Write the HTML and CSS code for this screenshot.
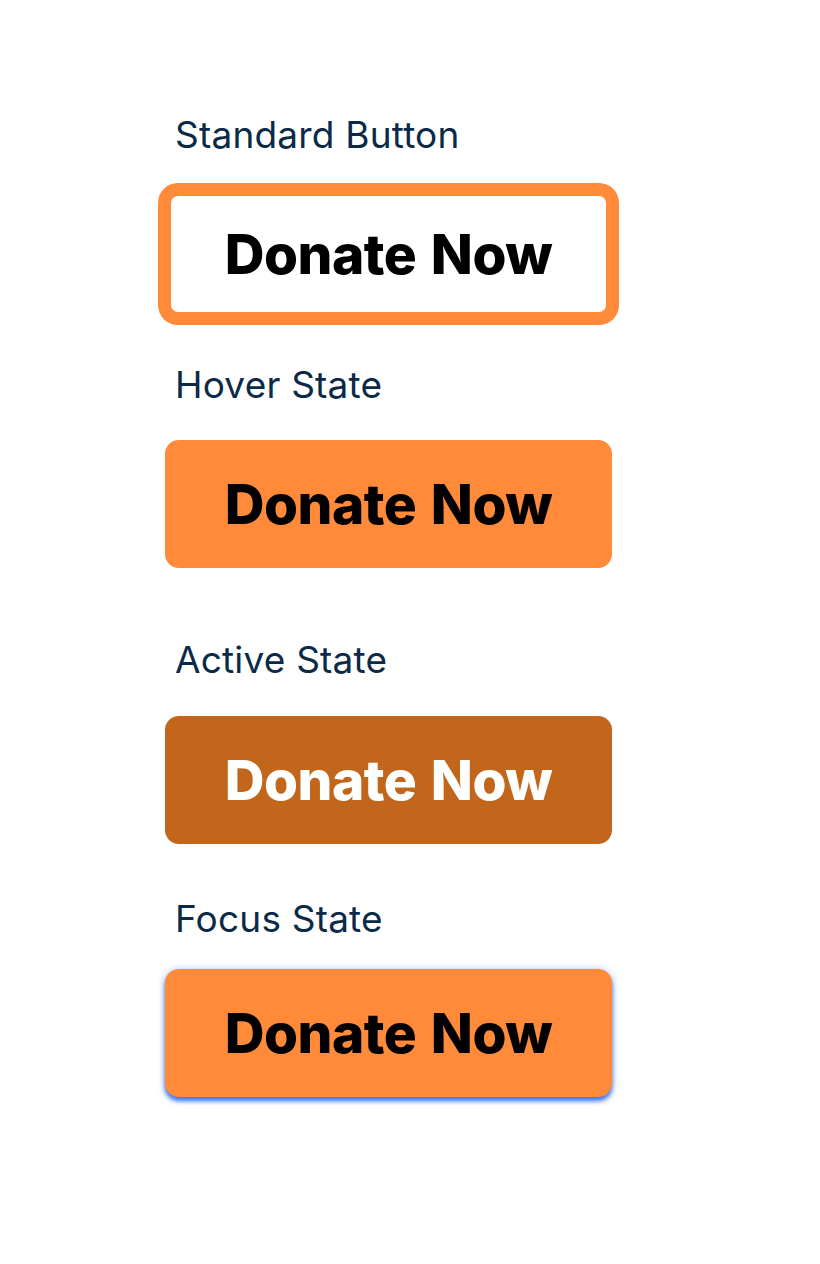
FILE: index.html
```html
<!DOCTYPE html>
<html lang="en">
<head>
<meta charset="utf-8">
<title>Donate Button States</title>
<link rel="stylesheet" href="styles.css">
</head>
<body>
<main class="states">
  <section class="state state--standard">
    <p class="state__label">Standard Button</p>
    <button class="btn btn--standard" type="button">Donate Now</button>
  </section>
  <section class="state state--hover">
    <p class="state__label">Hover State</p>
    <button class="btn btn--hover" type="button">Donate Now</button>
  </section>
  <section class="state state--active">
    <p class="state__label">Active State</p>
    <button class="btn btn--active" type="button">Donate Now</button>
  </section>
  <section class="state state--focus">
    <p class="state__label">Focus State</p>
    <button class="btn btn--focus" type="button">Donate Now</button>
  </section>
</main>
</body>
</html>
```

FILE: styles.css
```css
* { box-sizing: border-box; }

html, body {
  margin: 0;
  padding: 0;
  background: #ffffff;
}

body {
  font-family: Inter, "Noto Sans", "Liberation Sans", sans-serif;
}

.states {
  display: flex;
  flex-direction: column;
  padding: 117px 0 160px 165px;
}

.state {
  display: flex;
  flex-direction: column;
  align-items: flex-start;
}

.state--hover { margin-top: 49px; }
.state--active { margin-top: 74px; }
.state--focus { margin-top: 57px; }

.state__label {
  margin: 0 0 37px 10px;
  font-size: 37px;
  line-height: 36px;
  font-weight: 400;
  letter-spacing: 0.2px;
  color: #0b2a47;
}

.state--active .state__label { margin-bottom: 38px; }
.state--focus .state__label { margin-bottom: 32px; }

.btn {
  width: 447px;
  height: 128px;
  border: 0;
  border-radius: 14px;
  padding: 0;
  font-family: Inter, "Noto Sans", "Liberation Sans", sans-serif;
  font-size: 55px;
  font-weight: 800;
  letter-spacing: -0.5px;
  word-spacing: 3px;
  line-height: 1;
  color: #000000;
  background: #fe8a3a;
  display: flex;
  align-items: center;
  justify-content: center;
}

.btn--standard {
  background: #ffffff;
  border: 6px solid #fe8a3a;
  border-radius: 13px;
  box-shadow: 0 0 0 7px #fe8a3a;
}

.btn--active {
  background: #c1661a;
  color: #ffffff;
}

.btn--focus {
  box-shadow: 0 4px 4px 0 rgba(60, 115, 235, 0.95), 0 1px 9px rgba(60, 115, 235, 0.45);
}
```
